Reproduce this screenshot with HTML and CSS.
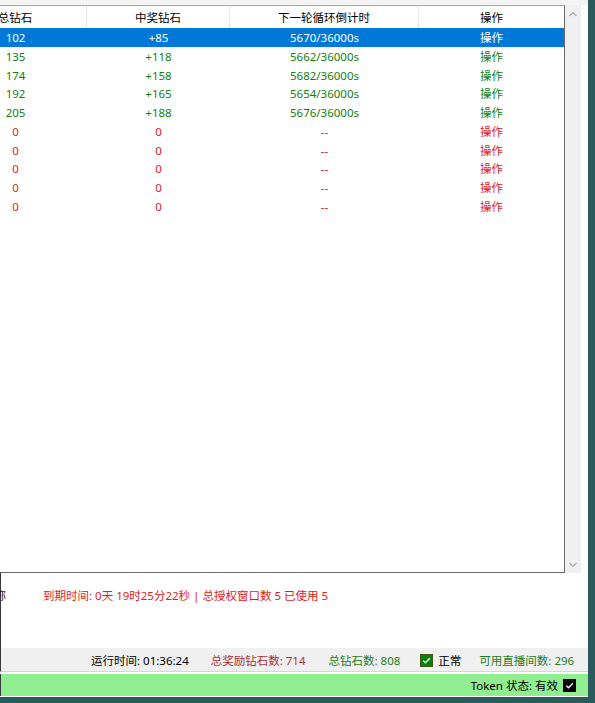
FILE: index.html
```html
<!DOCTYPE html>
<html lang="zh">
<head>
    <meta charset="UTF-8">
    <meta name="viewport" content="width=device-width, initial-scale=1.0">
    <title>钻石统计</title>
    <link rel="stylesheet" href="styles.css">
</head>
<body>

    <div class="window">
        <div class="top-strip"></div>

        <div class="list-area">
            <div class="list">
                <div class="grid head">
                    <div class="cell">总钻石</div>
                    <div class="cell">中奖钻石</div>
                    <div class="cell">下一轮循环倒计时</div>
                    <div class="cell last">操作</div>
                </div>

                <div class="grid row selected">
                    <div class="cell">102</div><div class="cell">+85</div><div class="cell">5670/36000s</div><div class="cell">操作</div>
                </div>
                <div class="grid row ok">
                    <div class="cell">135</div><div class="cell">+118</div><div class="cell">5662/36000s</div><div class="cell">操作</div>
                </div>
                <div class="grid row ok">
                    <div class="cell">174</div><div class="cell">+158</div><div class="cell">5682/36000s</div><div class="cell">操作</div>
                </div>
                <div class="grid row ok">
                    <div class="cell">192</div><div class="cell">+165</div><div class="cell">5654/36000s</div><div class="cell">操作</div>
                </div>
                <div class="grid row ok">
                    <div class="cell">205</div><div class="cell">+188</div><div class="cell">5676/36000s</div><div class="cell">操作</div>
                </div>
                <div class="grid row bad">
                    <div class="cell">0</div><div class="cell">0</div><div class="cell">--</div><div class="cell">操作</div>
                </div>
                <div class="grid row bad">
                    <div class="cell">0</div><div class="cell">0</div><div class="cell">--</div><div class="cell">操作</div>
                </div>
                <div class="grid row bad">
                    <div class="cell">0</div><div class="cell">0</div><div class="cell">--</div><div class="cell">操作</div>
                </div>
                <div class="grid row bad">
                    <div class="cell">0</div><div class="cell">0</div><div class="cell">--</div><div class="cell">操作</div>
                </div>
                <div class="grid row bad">
                    <div class="cell">0</div><div class="cell">0</div><div class="cell">--</div><div class="cell">操作</div>
                </div>
            </div>

            <!-- vertical scrollbar -->
            <div class="scrollbar">
                <svg width="16" height="16" viewBox="0 0 16 16"><path d="M4.5 10 L8 6.5 L11.5 10" fill="none" stroke="#a6a6a6" stroke-width="1.2"/></svg>
                <svg width="16" height="16" viewBox="0 0 16 16"><path d="M4.5 6 L8 9.5 L11.5 6" fill="none" stroke="#a6a6a6" stroke-width="1.2"/></svg>
            </div>
        </div>

        <div class="info">
            <span class="info-label">昵称</span>
            <span class="info-text">到期时间: 0天 19时25分22秒 | 总授权窗口数 5 已使用 5</span>
        </div>

        <div class="status">
            <span class="st-time">运行时间: 01:36:24</span>
            <span class="st-reward">总奖励钻石数: 714</span>
            <span class="st-total">总钻石数: 808</span>
            <span class="st-check">
                <span class="box green">
                    <svg width="11" height="11" viewBox="0 0 11 11"><path d="M2.2 5.6 L4.4 7.8 L8.8 3.2" fill="none" stroke="#fff" stroke-width="1.3"/></svg>
                </span>
                <span>正常</span>
            </span>
            <span class="st-rooms">可用直播间数: 296</span>
        </div>

        <div class="token">
            <span>Token 状态: 有效</span>
            <span class="box black">
                <svg width="11" height="11" viewBox="0 0 11 11"><path d="M2.2 5.6 L4.4 7.8 L8.8 3.2" fill="none" stroke="#fff" stroke-width="1.3"/></svg>
            </span>
        </div>
    </div>

</body>
</html>
```

FILE: styles.css
```css
* { margin: 0; padding: 0; box-sizing: border-box; }
body { width: 595px; height: 703px; overflow: hidden; background: #2b5a5c; font-family: "Noto Sans", "Noto Sans CJK SC", sans-serif; font-size: 11.5px; color: #000; }

.window { width: 588px; height: 697px; background: #fff; display: flex; flex-direction: column; overflow: hidden; }
.top-strip { height: 5px; background: #f4f4f4; flex-shrink: 0; }

/* List */
.list-area { display: flex; height: 568px; flex-shrink: 0; }
.list { flex-shrink: 0; width: 621px; margin-left: -56px; border-top: 1px solid #a8a8a8; border-right: 1px solid #6a6a6a; border-bottom: 1px solid #6a6a6a; background: #fff; }
.grid { display: grid; grid-template-columns: 143px 143px 189px 145px; }
.cell { text-align: center; white-space: nowrap; overflow: hidden; }

.head { height: 22px; line-height: 23px; }
.head .cell { border-right: 1px solid #e5e5e5; }
.head .cell.last { border-right: none; }

.row { height: 18.75px; line-height: 20px; }
.row.selected { background: #0078d7; color: #fff; }
.row.ok { color: #108010; }
.row.bad { color: #e01b1b; }

.scrollbar { width: 16px; background: #f0f0f0; display: flex; flex-direction: column; justify-content: space-between; padding: 1px 0 0 0; }
.scrollbar svg { display: block; }

/* Info line */
.info { height: 75px; display: flex; align-items: flex-start; padding-top: 14px; line-height: 18px; border-left: 1px solid #3a3a3a; white-space: nowrap; }
.info-label { margin-left: -18px; color: #222; }
.info-text { margin-left: 37px; color: #e01b1b; }

/* Status bar */
.status { height: 24px; background: #f0f0f0; display: flex; align-items: center; padding-left: 90px; padding-top: 1px; border-left: 1px solid #3a3a3a; border-bottom: 1px solid #d6d6d6; white-space: nowrap; }
.st-reward { margin-left: 22px; color: #a83238; }
.st-total { margin-left: 23px; color: #1e7e1e; }
.st-check { margin-left: 20px; display: flex; align-items: center; gap: 5px; }
.st-rooms { margin-left: 18px; color: #1e7e1e; }

.box { width: 13px; height: 13px; display: flex; align-items: center; justify-content: center; flex-shrink: 0; }
.box.green { background: #0a820a; border: 1px solid #3c5a16; }
.box.black { background: #000; border: 1px solid #000; }

/* Token bar */
.token { height: 22px; margin-top: 2px; background: #90ee90; display: flex; align-items: center; justify-content: flex-end; gap: 5px; padding-right: 12px; border-left: 1px solid #3a3a3a; white-space: nowrap; }
```
